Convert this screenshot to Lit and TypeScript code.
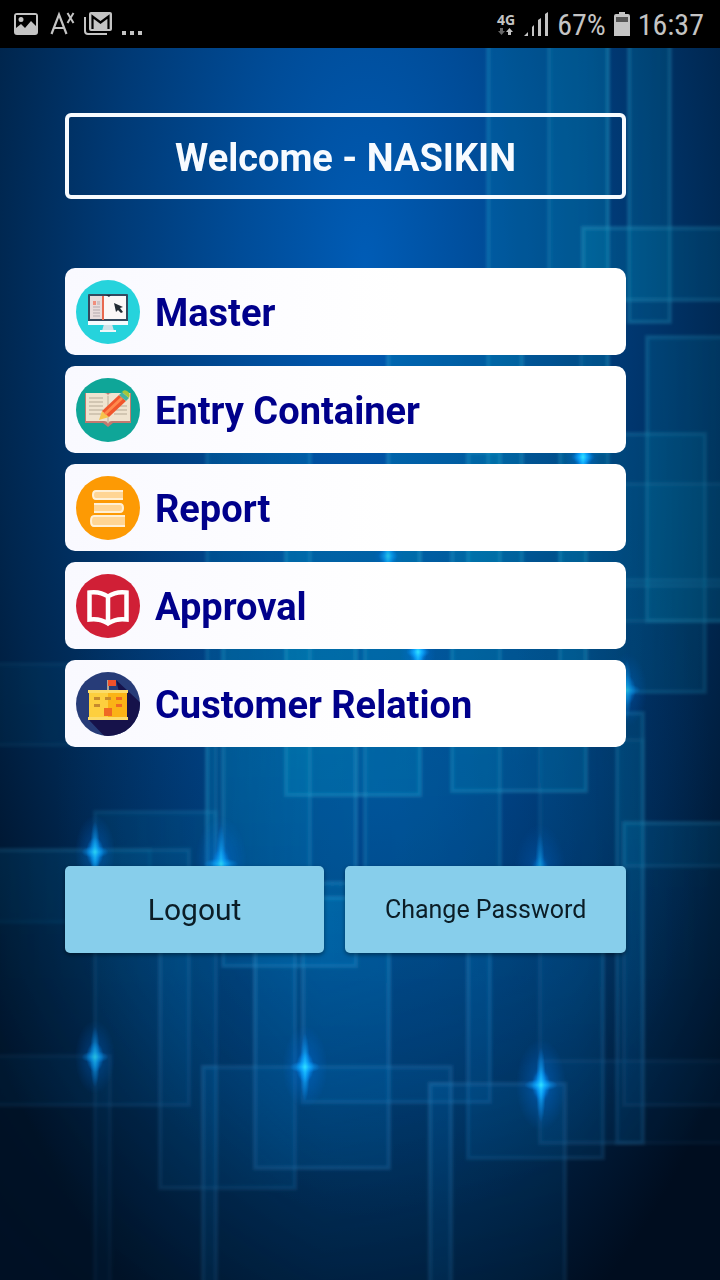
import { LitElement, html, svg, css } from "lit";
import { customElement } from "lit/decorators.js";

type Panel = [left: number, top: number, right: number, bottom: number, strength: number];
type Star = [x: number, y: number, size: number, strength: number];

// Overlapping translucent panels of the backdrop.
const panels: Panel[] = [
  [488, -20, 608, 470, 0.8],
  [549, -20, 608, 330, 0.6],
  [629, -20, 670, 322, 1],
  [583, 228, 740, 300, 1],
  [581, 303, 608, 452, 0.5],
  [388, 340, 522, 620, 0.9],
  [468, 452, 500, 640, 0.9],
  [647, 337, 740, 621, 0.9],
  [560, 434, 705, 692, 0.8],
  [560, 484, 740, 586, 0.5],
  [620, 580, 740, 621, 0.5],
  [452, 548, 586, 791, 0.9],
  [286, 540, 420, 795, 1],
  [207, 450, 310, 890, 0.7],
  [223, 640, 356, 966, 0.9],
  [365, 640, 500, 900, 0.7],
  [617, 713, 643, 1143, 0.8],
  [624, 823, 740, 1105, 0.5],
  [624, 823, 740, 866, 0.6],
  [-20, 664, 70, 745, 0.4],
  [-20, 850, 150, 922, 0.4],
  [-20, 850, 189, 1105, 0.7],
  [95, 812, 216, 1300, 0.6],
  [207, 740, 216, 870, 0.6],
  [160, 880, 295, 1188, 0.8],
  [255, 898, 389, 1168, 1],
  [303, 883, 490, 1102, 0.8],
  [203, 1067, 451, 1300, 0.7],
  [203, 1067, 216, 1300, 0.5],
  [-20, 1056, 110, 1300, 0.5],
  [468, 900, 603, 1158, 0.8],
  [540, 740, 643, 1143, 0.4],
  [540, 1061, 740, 1143, 0.4],
  [430, 1084, 565, 1300, 0.8],
  [430, 1084, 451, 1300, 0.4],
];

const stars: Star[] = [
  [95, 852, 34, 0.9],
  [95, 1057, 34, 0.8],
  [305, 1067, 38, 1],
  [541, 1085, 42, 1],
  [221, 864, 44, 0.9],
  [540, 872, 44, 0.7],
  [388, 556, 26, 0.7],
  [418, 652, 30, 1],
  [583, 457, 30, 1],
  [627, 690, 34, 0.7],
];

const backdrop = html`
  <svg class="backdrop" viewBox="0 48 720 1232" preserveAspectRatio="none" aria-hidden="true">
    <defs>
      <radialGradient id="base" gradientUnits="userSpaceOnUse" cx="0" cy="0" r="1"
        gradientTransform="translate(365 265) scale(500 1160)">
        <stop offset="0" stop-color="#005cb6" />
        <stop offset="0.25" stop-color="#004c98" />
        <stop offset="0.5" stop-color="#003a76" />
        <stop offset="0.75" stop-color="#00264e" />
        <stop offset="1" stop-color="#000d1f" />
      </radialGradient>
      <radialGradient id="sheen" gradientUnits="userSpaceOnUse" cx="0" cy="0" r="1"
        gradientTransform="translate(385 800) scale(330 420)">
        <stop offset="0" stop-color="#0060b8" stop-opacity="0.35" />
        <stop offset="1" stop-color="#0060b8" stop-opacity="0" />
      </radialGradient>
      <radialGradient id="halo">
        <stop offset="0" stop-color="#0088ff" stop-opacity="0.8" />
        <stop offset="0.4" stop-color="#0070e0" stop-opacity="0.3" />
        <stop offset="1" stop-color="#0070e0" stop-opacity="0" />
      </radialGradient>
      <radialGradient id="core">
        <stop offset="0" stop-color="#30e0ff" />
        <stop offset="0.4" stop-color="#12b0ff" stop-opacity="0.6" />
        <stop offset="1" stop-color="#0090ff" stop-opacity="0" />
      </radialGradient>
      <linearGradient id="glass" gradientUnits="userSpaceOnUse" x1="0" y1="700" x2="0" y2="1050">
        <stop offset="0" stop-color="#009cc4" />
        <stop offset="1" stop-color="#007ccc" />
      </linearGradient>
      <linearGradient id="edge" gradientUnits="userSpaceOnUse" x1="0" y1="700" x2="0" y2="1050">
        <stop offset="0" stop-color="#30b4d8" />
        <stop offset="1" stop-color="#3a9ad8" />
      </linearGradient>
      <linearGradient id="fade" gradientUnits="userSpaceOnUse" x1="0" y1="0" x2="720" y2="0">
        <stop offset="0" stop-color="#777" />
        <stop offset="0.45" stop-color="#fff" />
        <stop offset="0.8" stop-color="#ddd" />
        <stop offset="1" stop-color="#888" />
      </linearGradient>
      <linearGradient id="dusk" x1="0" y1="0" x2="0" y2="1">
        <stop offset="0.75" stop-color="#000" stop-opacity="0" />
        <stop offset="1" stop-color="#000" stop-opacity="0.5" />
      </linearGradient>
      <mask id="depth" maskUnits="userSpaceOnUse" x="0" y="48" width="720" height="1232">
        <rect x="0" y="48" width="720" height="1232" fill="url(#fade)" />
        <rect x="0" y="48" width="720" height="1232" fill="url(#dusk)" />
      </mask>
      <filter id="soft" x="-5%" y="-5%" width="110%" height="110%">
        <feGaussianBlur stdDeviation="1.500 1.800" />
      </filter>
    </defs>
    <rect x="0" y="48" width="720" height="1232" fill="url(#base)" />
    <rect x="0" y="48" width="720" height="1232" fill="url(#sheen)" />
    <g mask="url(#depth)">
      <g filter="url(#soft)">
        ${panels.map(
          ([l, t, r, b, s]) => svg`
            <rect x=${l} y=${t} width=${r - l} height=${b - t} opacity=${s}
              fill="url(#glass)" fill-opacity="0.24" stroke="url(#edge)" stroke-opacity="0.34" stroke-width="4" />`
        )}
      </g>
    </g>
    ${stars.map(
      ([x, y, z, s]) => svg`
        <g opacity=${s}>
          <ellipse cx=${x} cy=${y} rx=${z * 0.6} ry=${z * 1.1} fill="url(#halo)" />
          <ellipse cx=${x} cy=${y} rx="5" ry=${z * 0.9} fill="url(#core)" />
          <ellipse cx=${x} cy=${y} rx=${z * 0.4} ry="6" fill="url(#core)" />
          <ellipse cx=${x} cy=${y} rx="9" ry="15" fill="url(#core)" />
        </g>`
    )}
  </svg>
`;

const masterIcon = svg`
  <circle cx="32" cy="32" r="32" fill="#26d3dc" />
  <path d="M28 44h8l2 7H26z" fill="#cfe3e8" />
  <rect x="24" y="50" width="16" height="2" fill="#eef7fa" />
  <rect x="12" y="14" width="40" height="28" rx="1" fill="#34495e" />
  <rect x="12" y="41" width="40" height="4" fill="#f4fbfd" />
  <rect x="14" y="16" width="36" height="23" fill="#fbf8f8" />
  <rect x="14" y="16" width="12" height="23" fill="#e8dcdc" />
  <rect x="26" y="16" width="2" height="24" fill="#e8694f" />
  <rect x="17" y="21" width="3" height="4" fill="#f08e7c" />
  <path d="M17 27h7M17 30h7M17 33h7M17 36h7M21 22h3M21 24h3" stroke="#b3a9ad" />
  <path d="M30 15h5l-2 2z" fill="#1d2a38" />
  <path d="M38 23l9 4-3 1 3 4-2 1-3-3-2 2z" fill="#222b33" />`;

const entryIcon = svg`
  <circle cx="32" cy="32" r="32" fill="#0fa698" />
  <path d="M9 15h46v30H37l-5 4-5-4H9z" fill="#c27a70" />
  <path d="M10 15h18q4 0 4 3 0-3 4-3h18v28H36q-4 0-4 3 0-3-4-3H10z" fill="#efe3cf" />
  <path d="M13 20h14M13 24h14M13 28h14M13 32h14M13 36h12M38 36h13M40 32h11M43 28h8" stroke="#c9bda9" stroke-width="1.5" />
  <path d="M32 18v27" stroke="#cdbfa8" stroke-width="1.5" />
  <path d="M23 42l3-9 7 6z" fill="#f6c34c" />
  <path d="M26 33l17-16 7 6-17 16z" fill="#f0562c" />
  <path d="M28 35l17-16 2 2-17 16z" fill="#ff8a4d" />
  <path d="M43 17l3-3 7 6-3 3z" fill="#45b3a0" />
  <path d="M46 14q2-3 5-1 4 2 2 7z" fill="#a5c63b" />`;

const reportIcon = svg`
  <circle cx="32" cy="32" r="32" fill="#fd9a04" />
  <g fill="#ffd594" stroke="#fff0d6" stroke-width="2">
    <path d="M47 15H20q-3 0-3 4t3 4h27" />
    <path d="M18 28h26q3 0 3 4t-3 4H18" />
    <path d="M49 40H18q-3 0-3 5t3 5h31" />
  </g>`;

const approvalIcon = svg`
  <circle cx="32" cy="32" r="32" fill="#d01f36" />
  <path d="M13.500 18.500Q24 17 32 22.500 40 17 50.500 18.500V45.500Q40 44 32 49.500 24 44 13.500 45.500ZM32 22.500V49"
    fill="none" stroke="#fff" stroke-width="4.500" />`;

const customerIcon = svg`
  <clipPath id="disc"><circle cx="32" cy="32" r="32" /></clipPath>
  <g clip-path="url(#disc)">
    <rect width="64" height="64" fill="#273c78" />
    <path d="M40 8l28 26v34H32L13 48 50 47z" fill="#16124a" />
  </g>
  <path d="M32 8v12" stroke="#d9c8a0" stroke-width="1.500" />
  <rect x="32" y="8" width="8" height="6" fill="#f0512b" />
  <rect x="13" y="20" width="38" height="27" fill="#fdcf3e" />
  <path d="M32 20h19v27H32z" fill="#fbb316" />
  <path d="M12 18h40v3H12zM12 45h40v3H12z" fill="#fbdc6b" />
  <path d="M18 25h6v3h-6zM29 25h6v3h-6zM18 32h6v3h-6z" fill="#c68a2e" />
  <path d="M40 25h6v3h-6zM40 32h6v3h-6zM28 36h8v8h-8z" fill="#ef6a23" />`;

const menu = [
  { label: "Master", icon: masterIcon },
  { label: "Entry Container", icon: entryIcon },
  { label: "Report", icon: reportIcon },
  { label: "Approval", icon: approvalIcon },
  { label: "Customer Relation", icon: customerIcon },
];

@customElement("status-bar")
class StatusBar extends LitElement {
  static styles = css`
    :host {
      display: flex;
      align-items: center;
      justify-content: space-between;
      height: 48px;
      padding: 0 16px 0 12px;
      background: #000;
      color: #c4c4c4;
      font: 30px/48px "Roboto Condensed", Roboto, sans-serif;
    }
    .group {
      display: flex;
      align-items: center;
      gap: 8px;
    }
    .notices {
      gap: 7px;
    }
    svg {
      display: block;
    }
    .reading {
      padding-top: 2px;
    }
    .network {
      display: flex;
      flex-direction: column;
      align-items: center;
      font: bold 14px/14px "Open Sans", sans-serif;
    }
  `;

  render() {
    return html`
      <div class="group notices">
        <svg width="28" height="28" viewBox="0 0 28 28" aria-hidden="true">
          <path fill="#c4c4c4" fill-rule="evenodd"
            d="M5 3h18q3 0 3 3v16q0 3-3 3H5q-3 0-3-3V6q0-3 3-3zM4 5v13l5-4 4 4 6-7 5 5V5zM9 7a2.500 2.500 0 1 1 0 5 2.500 2.500 0 0 1 0-5z" />
        </svg>
        <svg width="30" height="28" viewBox="0 0 30 28" fill="none" stroke="#c4c4c4" aria-hidden="true">
          <path d="M4.500 24L12 4.500 19.500 24M7 18h10" stroke-width="2.200" />
          <path d="M20.500 3l6 10M26.500 3l-6 10" stroke-width="2" />
        </svg>
        <svg width="28" height="28" viewBox="0 0 28 28" aria-hidden="true">
          <path d="M1 7v14q0 3 3 3h19" fill="none" stroke="#c4c4c4" stroke-width="2" />
          <rect x="5" y="2" width="23" height="19" rx="2" fill="#c4c4c4" />
          <path d="M8.500 19V6.500l8 6 8-6V19" fill="none" stroke="#000" stroke-width="2.200" />
        </svg>
        <svg width="24" height="28" viewBox="0 0 24 28" fill="#c4c4c4" aria-hidden="true">
          <path d="M3 21h4v4H3zM11 21h4v4h-4zM19 21h4v4h-4z" />
        </svg>
      </div>
      <div class="group">
        <span class="network">
          4G
          <svg width="16" height="9" viewBox="0 0 16 9" aria-hidden="true">
            <path d="M2 1h3v3h2L3.500 8 0 4h2z" fill="#666" />
            <path d="M10 8h3V5h2l-3.500-4L8 5h2z" fill="#c4c4c4" />
          </svg>
        </span>
        <svg width="26" height="26" viewBox="0 0 26 26" fill="#c4c4c4" aria-hidden="true">
          <path d="M1 25l4-4v4zM9 25V16l2-2v11zM15 25V9l3-2v18zM22 25V3l3-2v24z" />
        </svg>
        <span class="reading">67%</span>
        <svg width="16" height="26" viewBox="0 0 16 26" aria-hidden="true">
          <path d="M5 1h6v2h3q2 0 2 2v20H0V5q0-2 2-2h3z" fill="#c4c4c4" />
          <rect x="2" y="6" width="12" height="5" fill="#555" />
        </svg>
        <time class="reading">16:37</time>
      </div>
    `;
  }
}

@customElement("app-root")
class AppRoot extends LitElement {
  static styles = css`
    :host {
      display: flex;
      flex-direction: column;
      min-height: 100vh;
      font-family: Roboto, sans-serif;
    }
    .screen {
      position: relative;
      isolation: isolate;
      flex: 1;
      padding: 65px 94px 65px 65px;
    }
    .backdrop {
      position: absolute;
      inset: 0;
      z-index: -1;
      width: 100%;
      height: 100%;
    }
    h1 {
      margin: 0 0 69px;
      padding: 18px 16px 14px;
      border: 4px solid #f7fbff;
      border-radius: 6px;
      color: #f7fbff;
      font-size: 38px;
      line-height: 46px;
      font-weight: 700;
      text-align: center;
    }
    .menu {
      display: flex;
      flex-direction: column;
      gap: 11px;
      margin-bottom: 119px;
    }
    .item {
      display: flex;
      align-items: center;
      gap: 15px;
      padding: 11px;
      border: 0;
      border-radius: 10px;
      background: linear-gradient(90deg, #f9f9ff, #fff 60%);
      color: #00008b;
      font: bold 38px/61px Roboto, sans-serif;
      text-align: left;
    }
    .item span {
      padding-top: 4px;
    }
    .item svg {
      flex: none;
      width: 64px;
      height: 64px;
    }
    .actions {
      display: grid;
      grid-template-columns: 12fr 13fr;
      gap: 21px;
    }
    .action {
      padding: 20px 8px;
      border: 0;
      border-radius: 5px;
      background: #87ceeb;
      box-shadow: 0 2px 4px rgba(0, 0, 0, 0.4);
      color: #0b1d26;
      font: 25px/47px Roboto, sans-serif;
    }
    .large {
      font-size: 30px;
    }
  `;

  render() {
    return html`
      <status-bar></status-bar>
      <main class="screen">
        ${backdrop}
        <h1>Welcome - NASIKIN</h1>
        <nav class="menu">
          ${menu.map(
            ({ label, icon }) => html`
              <button class="item" type="button">
                <svg viewBox="0 0 64 64" aria-hidden="true">${icon}</svg>
                <span>${label}</span>
              </button>`
          )}
        </nav>
        <div class="actions">
          <button class="action large" type="button">Logout</button>
          <button class="action" type="button">Change Password</button>
        </div>
      </main>
    `;
  }
}
